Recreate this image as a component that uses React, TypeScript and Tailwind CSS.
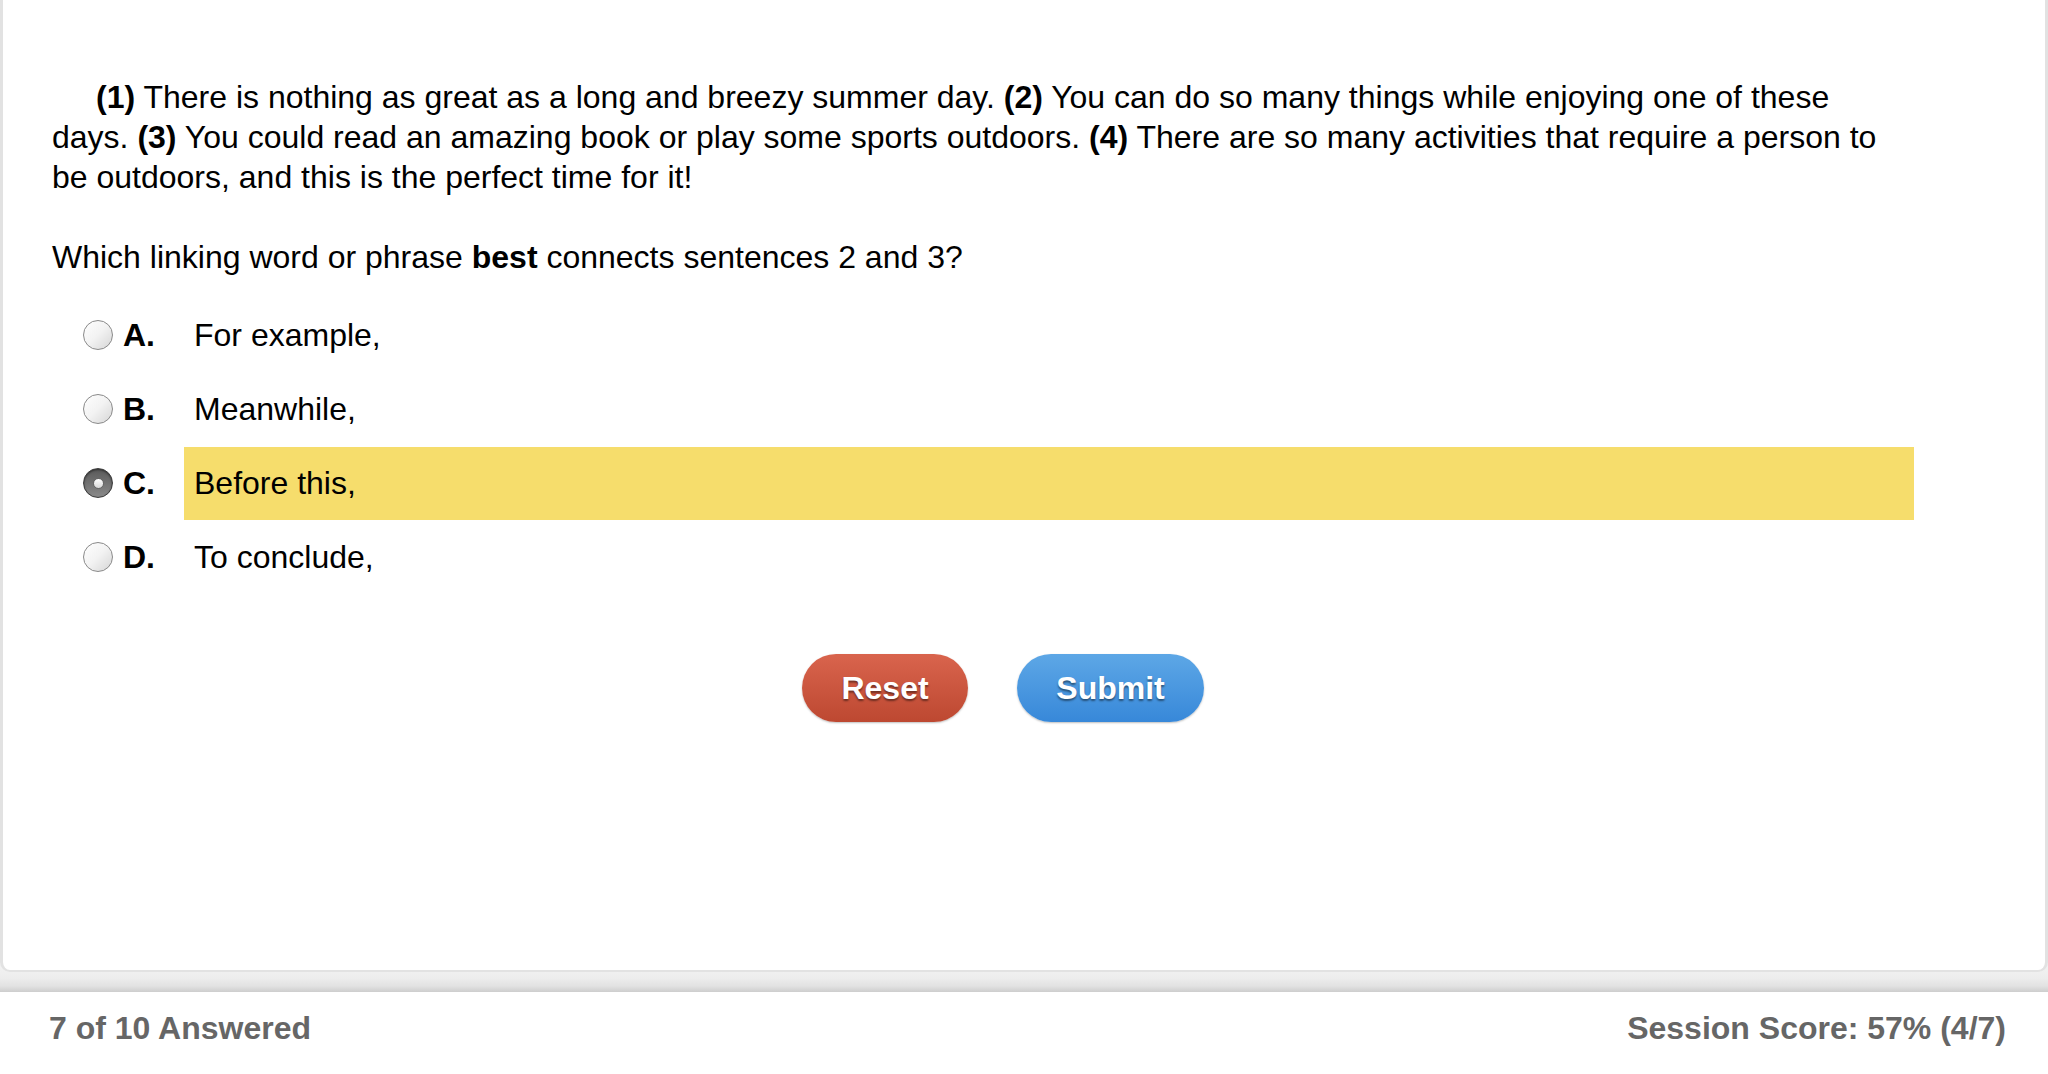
const passage = [
  { n: "(1)", text: " There is nothing as great as a long and breezy summer day. " },
  { n: "(2)", text: " You can do so many things while enjoying one of these days. " },
  { n: "(3)", text: " You could read an amazing book or play some sports outdoors. " },
  { n: "(4)", text: " There are so many activities that require a person to be outdoors, and this is the perfect time for it!" },
];

const choices = [
  { letter: "A.", text: "For example," },
  { letter: "B.", text: "Meanwhile," },
  { letter: "C.", text: "Before this," },
  { letter: "D.", text: "To conclude," },
];

function Radio({ checked }: { checked: boolean }) {
  if (checked) {
    return (
      <span className="flex h-[30px] w-[30px] items-center justify-center rounded-full border border-[#3a3a3a] bg-gradient-to-b from-[#5a5a5a] to-[#8a8a8a] shadow-[inset_0_1px_2px_rgba(0,0,0,0.5)]">
        <span className="h-[11px] w-[11px] rounded-full border border-[#666] bg-gradient-to-b from-white to-[#d8d8d8]" />
      </span>
    );
  }
  return (
    <span className="h-[30px] w-[30px] rounded-full border-[1.5px] border-[#8a8a8a] bg-gradient-to-br from-white via-[#f2f2f2] to-[#d6d6d6]" />
  );
}

export default function App() {
  const selected = "C.";

  return (
    <div
      className="flex h-[1074px] w-[2048px] flex-col bg-white text-black"
      style={{ fontFamily: '"Liberation Sans", Arial, sans-serif' }}
    >
      <div className="bg-[linear-gradient(to_bottom,#f2f2f2_0px,#f2f2f2_965px,#ededed_978px,#e2e2e2_986px,#cdcdcd_992px)] pb-[20px]">
        <div className="h-[972px] rounded-b-[10px] border-x-[3px] border-b-[2px] border-[#e2e2e2] bg-white">
          <div className="pl-[49px] pt-[77px]">
            <p className="w-[1850px] indent-[44px] text-[32px] leading-[40px]">
              {passage.map((s) => (
                <span key={s.n}>
                  <b>{s.n}</b>
                  {s.text}
                </span>
              ))}
            </p>

            <p className="mt-[40px] text-[32px] leading-[40px]">
              Which linking word or phrase <b>best</b> connects sentences 2 and 3?
            </p>

            <div className="mt-[21px] flex flex-col">
              {choices.map((c) => {
                const on = c.letter === selected;
                return (
                  <div key={c.letter} className="flex h-[74px] items-center">
                    <div className="ml-[31px] flex w-[101px] items-center gap-[10px]">
                      <Radio checked={on} />
                      <span className="text-[32px] font-bold">{c.letter}</span>
                    </div>
                    <div
                      className={
                        on
                          ? "flex h-[73px] w-[1730px] items-center bg-[#f6dd6c] pl-[10px] text-[32px]"
                          : "flex h-[73px] w-[1730px] items-center pl-[10px] text-[32px]"
                      }
                    >
                      {c.text}
                    </div>
                  </div>
                );
              })}
            </div>

            <div className="mt-[60px] flex justify-center gap-[49px] pr-[91px]">
              <button className="h-[68px] w-[166px] rounded-full bg-gradient-to-b from-[#d9644d] to-[#bd4831] text-[32px] font-bold text-white shadow-[0_1px_2px_rgba(0,0,0,0.25)] [text-shadow:0_2px_2px_rgba(0,0,0,0.45)]">
                Reset
              </button>
              <button className="h-[68px] w-[187px] rounded-full bg-gradient-to-b from-[#5da7e6] to-[#3788d9] text-[32px] font-bold text-white shadow-[0_1px_2px_rgba(0,0,0,0.25)] [text-shadow:0_2px_2px_rgba(0,0,0,0.45)]">
                Submit
              </button>
            </div>
          </div>
        </div>
      </div>

      <div className="flex h-[72px] items-center justify-between pl-[49px] pr-[42px] text-[32px] font-bold text-[#666]">
        <span>7 of 10 Answered</span>
        <span>Session Score: 57% (4/7)</span>
      </div>
    </div>
  );
}
